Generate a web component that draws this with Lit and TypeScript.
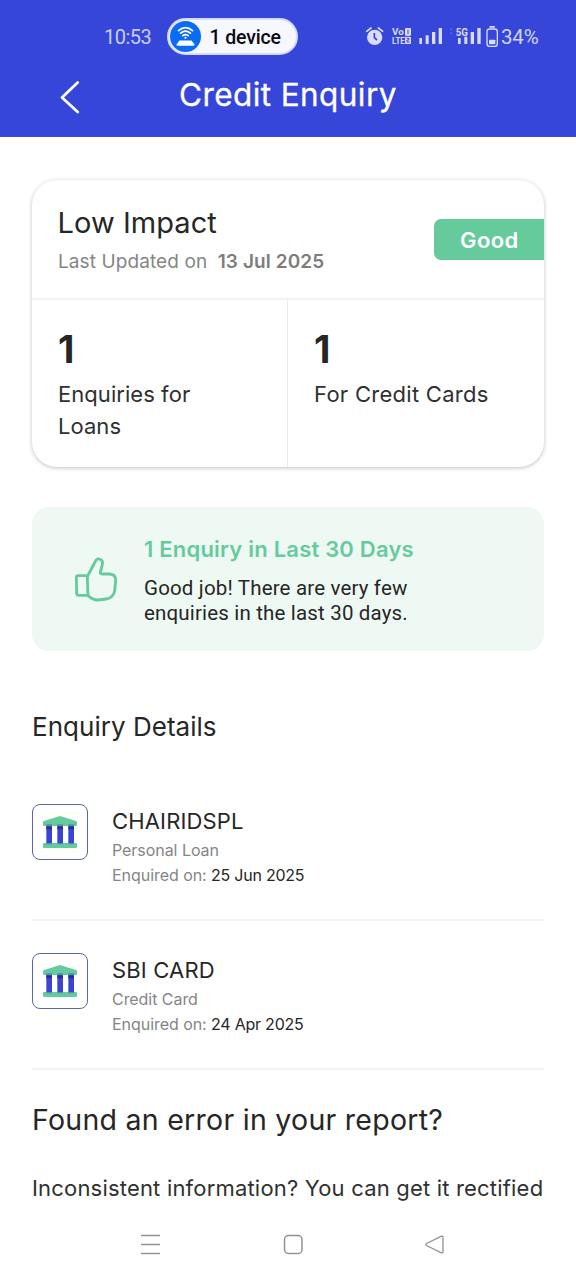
import { LitElement, html, css, svg } from "lit";
import { customElement } from "lit/decorators.js";

interface Enquiry {
  lender: string;
  product: string;
  date: string;
}

const ENQUIRIES: Enquiry[] = [
  { lender: "CHAIRIDSPL", product: "Personal Loan", date: "25 Jun 2025" },
  { lender: "SBI CARD", product: "Credit Card", date: "24 Apr 2025" },
];

const signal = (x: number) => svg`
  <rect x=${x} y="84" width="8" height="18" rx="1"/>
  <rect x=${x + 19} y="76" width="9" height="26" rx="1"/>
  <rect x=${x + 38} y="66" width="10" height="36" rx="1"/>
  <rect x=${x + 58} y="54" width="10" height="48" rx="1"/>`;

@customElement("status-bar")
export class StatusBar extends LitElement {
  static styles = css`
    :host { display: flex; align-items: center; height: 72px; box-sizing: border-box; padding-left: 104px; font-family: Roboto, sans-serif; white-space: nowrap; }
    .time { width: 63px; font-size: 20px; line-height: 24px; color: #c9cef8; margin-top: 2px; letter-spacing: -0.5px; }
    .pill { display: flex; align-items: center; box-sizing: border-box; width: 131px; height: 37px; border-radius: 19px; background: #f7f8fe; border: 2px solid #d3dafa; margin-top: 1px; color: #0b0b12; font-weight: 500; font-size: 19.5px; letter-spacing: -0.15px; }
    .pill svg { width: 31px; height: 31px; margin: 0 8.5px 0 1px; }
    .pill span { margin-top: 2px; }
    .icons { width: 136px; height: 24px; margin-left: 67px; margin-top: 2px; fill: #d9dcfb; }
    .pct { color: #d0d4fa; font-size: 20.5px; line-height: 24px; margin-top: 2px; letter-spacing: -0.2px; }
  `;
  render() {
    return html`
      <span class="time">10:53</span>
      <span class="pill">
        <svg viewBox="0 0 31 31">
          <circle cx="15.5" cy="15.5" r="15.5" fill="#0a6cf5"/>
          <g fill="none" stroke="#fff" stroke-width="1.7" stroke-linecap="round">
            <path d="M8.5 9.6Q15.5 3.6 22.5 9.6"/>
            <path d="M10.6 12.2Q15.5 8 20.4 12.2"/>
            <path d="M12.8 14.7Q15.5 12.6 18.2 14.7"/>
          </g>
          <circle cx="15.5" cy="16.8" r="1.1" fill="#fff"/>
          <path d="M9.5 19.5h12l2.800 3.700q.3 1.600-1.200 1.600H7.900q-1.500 0-1.200-1.600z" fill="#fff"/>
        </svg>
        <span>1 device</span>
      </span>
      <svg class="icons" viewBox="45 45 408 72">
        <circle cx="74" cy="82" r="23"/>
        <path d="M50 64L63 54M98 64L85 54" stroke="#d9dcfb" stroke-width="5" stroke-linecap="round"/>
        <path d="M73 69V83L81 90" stroke="#3546d8" stroke-width="5" fill="none"/>
        <text x="126" y="74" font-family="Roboto" font-weight="700" font-size="26" textLength="35" lengthAdjust="spacingAndGlyphs">Vo</text>
        <text x="126" y="102" font-family="Roboto" font-weight="700" font-size="27" textLength="38" lengthAdjust="spacingAndGlyphs">LTE</text>
        <rect x="165" y="54" width="18" height="23" rx="3"/>
        <rect x="165" y="80" width="18" height="22" rx="3"/>
        <path d="M174 59V72M170 85h7v5h-6v6h8" stroke="#3546d8" stroke-width="3" fill="none"/>
        ${signal(208)}
        <rect x="324" y="84" width="8" height="18" rx="1"/>
        <rect x="343" y="80" width="9" height="22" rx="1"/>
        <rect x="362" y="66" width="10" height="36" rx="1"/>
        <rect x="382" y="54" width="10" height="48" rx="1"/>
        <circle cx="304" cy="58" r="3" opacity=".25"/><circle cx="304" cy="70" r="3" opacity=".25"/>
        <text x="317" y="77" font-family="Roboto" font-weight="700" font-size="33" textLength="37" lengthAdjust="spacingAndGlyphs">5G</text>
        <rect x="411" y="57" width="31" height="52" rx="8" fill="none" stroke="#d9dcfb" stroke-width="4"/>
        <rect x="418" y="48" width="17" height="5" rx="2"/>
        <rect x="417" y="89" width="19" height="14" rx="2"/>
      </svg>
      <span class="pct">34%</span>
    `;
  }
}

@customElement("enquiry-row")
export class EnquiryRow extends LitElement {
  static properties = { item: { attribute: false } };
  declare item: Enquiry;
  static styles = css`
    :host { display: flex; gap: 24px; height: 115px; border-bottom: 2px solid #f3f3f3; margin-bottom: 32px; white-space: nowrap; }
    .tile { box-sizing: border-box; width: 56px; height: 56px; flex: none; border: 1px solid #5c63b4; border-radius: 8px; }
    .tile svg { display: block; width: 54px; height: 54px; }
    .name { font-size: 22px; line-height: 28px; margin-top: 3px; letter-spacing: 0.16px; color: #262626; }
    .line { font-size: 16px; line-height: 24px; margin-top: 3px; color: #858585; letter-spacing: -0.05px; }
    .line + .line { margin-top: 1px; }
    .date { color: #262626; letter-spacing: -0.24px; }
  `;
  render() {
    return html`
      <div class="tile">
        <svg viewBox="39 45 162 162">
          <g fill="#3a44d2">
            <rect x="79" y="104" width="17" height="58"/>
            <rect x="112" y="104" width="17" height="58"/>
            <rect x="145" y="104" width="17" height="58"/>
          </g>
          <path d="M79 106h17v12H79zM112 106h17v12h-17zM145 106h17v12h-17z" fill="#2a2f96"/>
          <path d="M120 78L168 93Q171 94 171 97V104Q171 108 167 108H73Q69 108 69 104V97Q69 94 72 93Z" fill="#65cb9d"/>
          <path d="M79 103h17v6H79zM112 103h17v6h-17zM145 103h17v6h-17z" fill="#4b91ad"/>
          <rect x="69" y="159" width="102" height="15" rx="4" fill="#65cb9d"/>
          <path d="M79 159h17v4H79zM112 159h17v4h-17zM145 159h17v4h-17z" fill="#4b91ad"/>
        </svg>
      </div>
      <div>
        <div class="name">${this.item.lender}</div>
        <div class="line">${this.item.product}</div>
        <div class="line">Enquired on: <span class="date">${this.item.date}</span></div>
      </div>
    `;
  }
}

@customElement("app-root")
export class AppRoot extends LitElement {
  static styles = css`
    :host { display: flex; flex-direction: column; height: 1280px; overflow: hidden; background: #fff; color: #262626; font-family: Inter, sans-serif; white-space: nowrap; }
    .top { background: #3546d8; height: 137px; flex: none; }
    .bar { display: flex; align-items: center; height: 46px; padding-left: 60px; color: #fff; }
    .back { width: 20px; height: 34px; margin-top: 4px; }
    .title { margin: 0 0 0 99px; font-size: 31.5px; line-height: 40px; font-weight: 400; letter-spacing: 0.42px; -webkit-text-stroke: 0.3px #fff; }
    main { padding: 43px 32px 0; flex: 1; min-height: 0; overflow: hidden; }
    .card { height: 287px; border-radius: 25px; box-shadow: 0 1px 4px rgba(0,0,0,.25); overflow: hidden; display: flex; flex-direction: column; }
    .head { display: flex; justify-content: space-between; height: 118px; border-bottom: 2px solid #f3f3f3; padding-left: 26px; }
    .impact { font-size: 29px; line-height: 40px; margin: 23px 0 0 -0.5px; letter-spacing: 0.06px; }
    .updated { font-size: 19px; line-height: 24px; margin-top: 7px; color: #858585; letter-spacing: 0.1px; }
    .updated b { font-weight: 600; margin-left: 5px; color: #7d7d7d; letter-spacing: 0.1px; }
    .badge { width: 110px; height: 41px; box-sizing: border-box; padding-left: 26px; margin-top: 39px; background: #65cb9d; color: #fff; border-radius: 7px 0 0 7px; font-size: 22px; line-height: 42px; font-weight: 600; letter-spacing: 0.45px; }
    .stats { display: grid; grid-template-columns: 256px 256px; flex: 1; }
    .stat { padding: 29px 26px 0; }
    .stat:first-child { border-right: 1px solid #ebebeb; }
    .stat:first-child .label { width: 160px; white-space: normal; letter-spacing: 0.05px; }
    .num { font-size: 38px; line-height: 40px; font-weight: 700; }
    .label { font-size: 22px; line-height: 32px; margin-top: 8.5px; letter-spacing: 0.28px; color: #303030; }
    .banner { margin-top: 40px; height: 144px; border-radius: 17px; background: #eef9f4; display: flex; }
    .thumb { width: 44px; height: 45px; margin: 50px 26px 0 42px; flex: none; }
    .btitle { font-size: 22px; line-height: 28px; font-weight: 600; color: #65cb9d; margin-top: 28px; letter-spacing: 0.21px; }
    .btext { font-family: Roboto, sans-serif; font-size: 20.5px; line-height: 25px; margin-top: 12.5px; letter-spacing: 0.17px; }
    .sec { font-size: 26px; line-height: 32px; font-weight: 400; margin: 60px 0 61px; letter-spacing: 0.03px; }
    .found { font-size: 28.5px; line-height: 36px; font-weight: 400; margin: 2px 0 0; letter-spacing: 0.27px; }
    .incon { font-size: 22px; line-height: 32px; margin: 34px 0 0; letter-spacing: 0.19px; color: #303030; }
    nav { height: 71px; flex: none; box-sizing: border-box; padding: 0 131px 0 140px; display: flex; justify-content: space-between; align-items: center; }
    nav svg { width: 21px; height: 21px; fill: none; stroke: #929292; stroke-width: 1.5; }
  `;
  render() {
    return html`
      <div class="top">
        <status-bar></status-bar>
        <div class="bar">
          <svg class="back" viewBox="0 0 20 34" fill="none" stroke="#fff" stroke-width="2.8" stroke-linecap="round" stroke-linejoin="round"><path d="M17.7 2.5L2 17.5L17.7 32"/></svg>
          <h1 class="title">Credit Enquiry</h1>
        </div>
      </div>
      <main>
        <section class="card">
          <div class="head">
            <div>
              <div class="impact">Low Impact</div>
              <div class="updated">Last Updated on <b>13 Jul 2025</b></div>
            </div>
            <div class="badge">Good</div>
          </div>
          <div class="stats">
            <div class="stat"><div class="num">1</div><div class="label">Enquiries for Loans</div></div>
            <div class="stat"><div class="num">1</div><div class="label">For Credit Cards</div></div>
          </div>
        </section>
        <section class="banner">
          <svg class="thumb" viewBox="42 110 132 135" fill="none" stroke="#65cb9d" stroke-width="8.5" stroke-linejoin="round">
            <path d="M80 166H55Q49 166 49 172L50 219Q50 225 56 225H82"/>
            <path d="M82 172Q82 166 86 161L105 125Q110 114 118 116Q130 119 127 132L121 156Q120 161 126 161H149Q168 162 167 182L164 210Q161 233 138 236L114 239Q100 240 84 226Z"/>
          </svg>
          <div>
            <div class="btitle">1 Enquiry in Last 30 Days</div>
            <div class="btext">Good job! There are very few<br>enquiries in the last 30 days.</div>
          </div>
        </section>
        <h2 class="sec">Enquiry Details</h2>
        ${ENQUIRIES.map((e) => html`<enquiry-row .item=${e}></enquiry-row>`)}
        <h2 class="found">Found an error in your report?</h2>
        <p class="incon">Inconsistent information? You can get it rectified</p>
      </main>
      <nav>
        <svg viewBox="0 0 21 21"><path d="M1 1.5H20M1 10.5H20M1 19.5H20"/></svg>
        <svg viewBox="0 0 21 21"><rect x="2.5" y="1.5" width="17.5" height="18" rx="4"/></svg>
        <svg viewBox="0 0 21 21"><path d="M17.5 2.2L2.5 9.5Q1.2 10.5 2.5 11.5L17.5 18.8Q19 19.2 19 17.7V3.3Q19 1.8 17.5 2.2Z" stroke-width="1.3"/></svg>
      </nav>
    `;
  }
}
